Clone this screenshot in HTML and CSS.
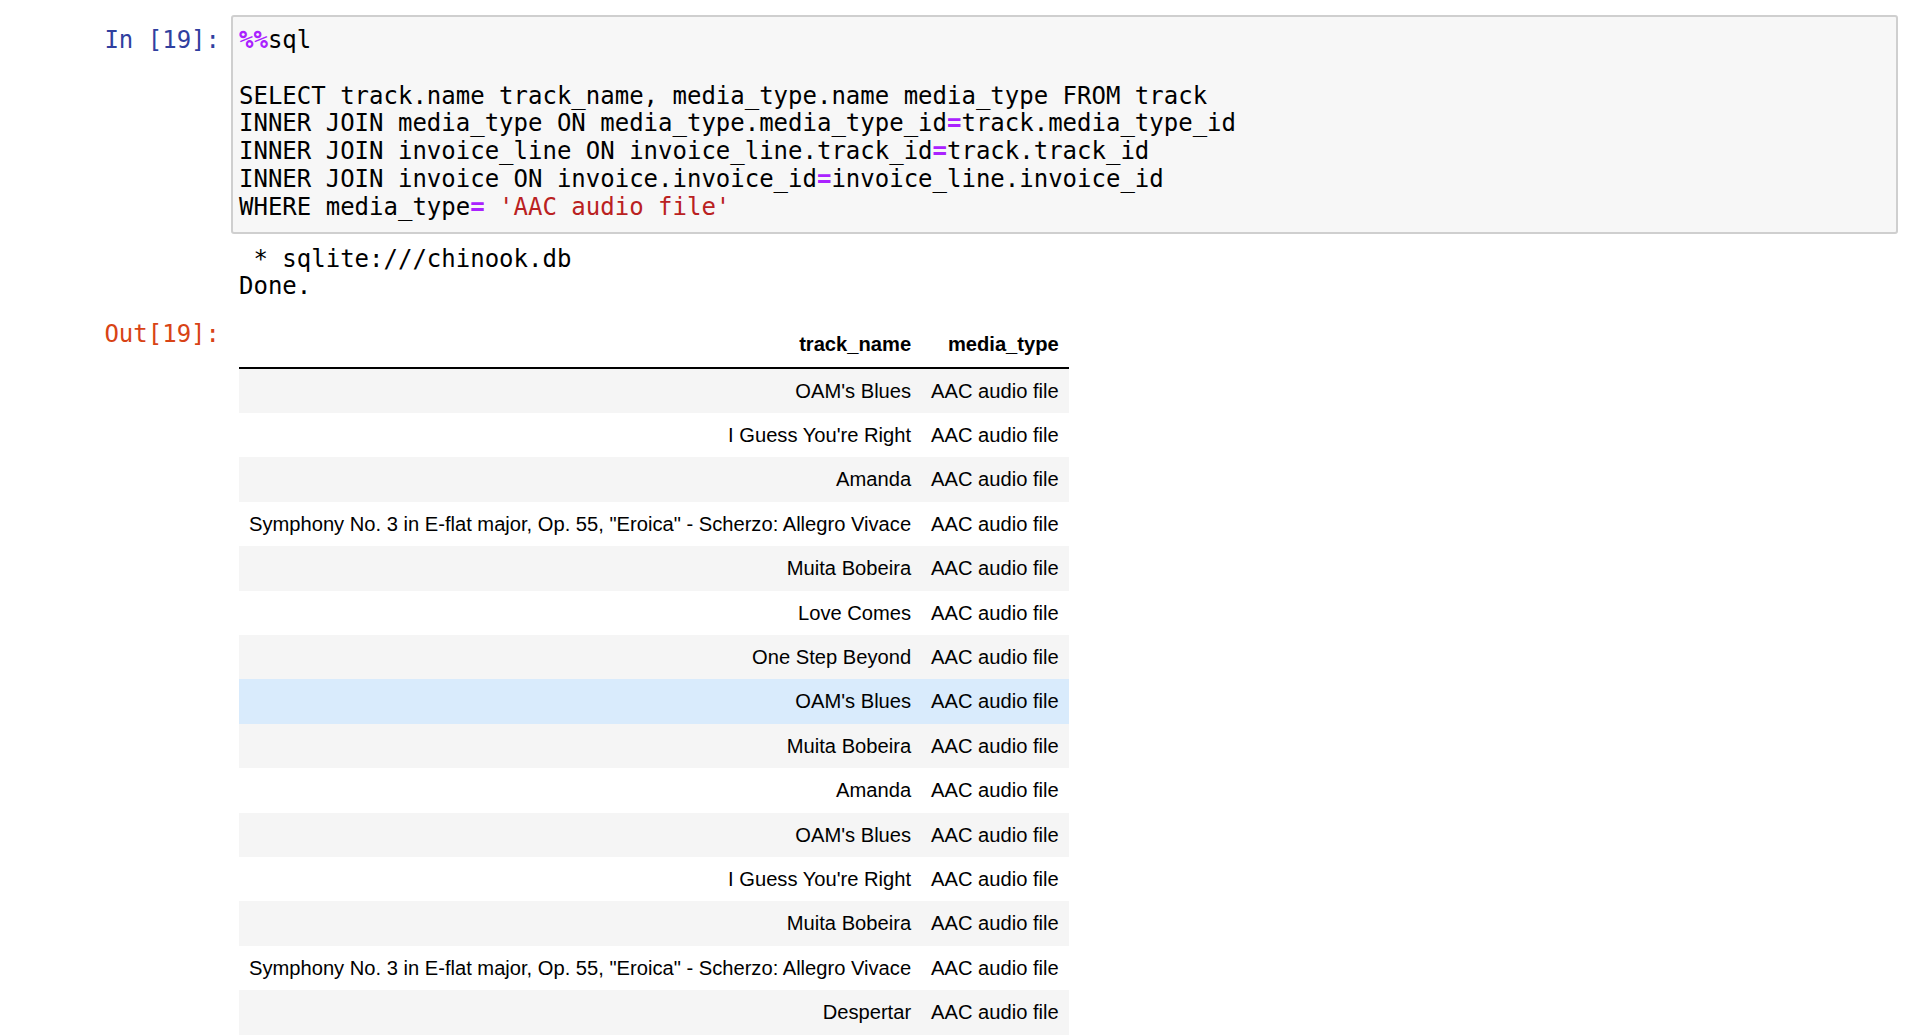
FILE: index.html
```html
<!DOCTYPE html>
<html>
<head>
<meta charset="utf-8">
<link rel="stylesheet" href="styles.css">
</head>
<body>
<div class="notebook">
  <div class="cell-row input-row">
    <div class="prompt in-prompt">In&nbsp;[19]:</div>
    <div class="input-area"><pre class="code"><span class="op">%%</span>sql

SELECT track.name track_name, media_type.name media_type FROM track
INNER JOIN media_type ON media_type.media_type_id<span class="op">=</span>track.media_type_id
INNER JOIN invoice_line ON invoice_line.track_id<span class="op">=</span>track.track_id
INNER JOIN invoice ON invoice.invoice_id<span class="op">=</span>invoice_line.invoice_id
WHERE media_type<span class="op">=</span> <span class="str">'AAC audio file'</span></pre></div>
  </div>
  <div class="cell-row stream-row">
    <div class="prompt"></div>
    <pre class="stream"> * sqlite:///chinook.db
Done.</pre>
  </div>
  <div class="cell-row out-row">
    <div class="prompt out-prompt">Out[19]:</div>
    <div class="output-html">
      <table class="df">
        <thead>
          <tr><th>track_name</th><th>media_type</th></tr>
        </thead>
        <tbody>
          <tr><td>OAM's Blues</td><td>AAC audio file</td></tr>
          <tr><td>I Guess You're Right</td><td>AAC audio file</td></tr>
          <tr><td>Amanda</td><td>AAC audio file</td></tr>
          <tr><td>Symphony No. 3 in E-flat major, Op. 55, "Eroica" - Scherzo: Allegro Vivace</td><td>AAC audio file</td></tr>
          <tr><td>Muita Bobeira</td><td>AAC audio file</td></tr>
          <tr><td>Love Comes</td><td>AAC audio file</td></tr>
          <tr><td>One Step Beyond</td><td>AAC audio file</td></tr>
          <tr class="hover"><td>OAM's Blues</td><td>AAC audio file</td></tr>
          <tr><td>Muita Bobeira</td><td>AAC audio file</td></tr>
          <tr><td>Amanda</td><td>AAC audio file</td></tr>
          <tr><td>OAM's Blues</td><td>AAC audio file</td></tr>
          <tr><td>I Guess You're Right</td><td>AAC audio file</td></tr>
          <tr><td>Muita Bobeira</td><td>AAC audio file</td></tr>
          <tr><td>Symphony No. 3 in E-flat major, Op. 55, "Eroica" - Scherzo: Allegro Vivace</td><td>AAC audio file</td></tr>
          <tr><td>Despertar</td><td>AAC audio file</td></tr>
        </tbody>
      </table>
    </div>
  </div>
</div>
</body>
</html>
```

FILE: styles.css
```css
html, body {
  margin: 0;
  padding: 0;
  background: #ffffff;
}

body {
  font-family: "Liberation Sans", Arial, sans-serif;
  color: #000;
  overflow: hidden;
}

.notebook {
  padding-top: 15px;
  padding-right: 32px;
}

.cell-row {
  display: flex;
  align-items: flex-start;
  gap: 11px;
}

.prompt {
  width: 220px;
  flex: 0 0 220px;
  text-align: right;
  font-family: "DejaVu Sans Mono", "Liberation Mono", monospace;
  font-size: 24px;
  line-height: 27.8px;
  white-space: nowrap;
}

.in-prompt {
  color: #303f9f;
  padding-top: 12px;
}

.out-prompt {
  color: #d84315;
}

.input-area {
  flex: 1;
  background: #f7f7f7;
  border: 2px solid #cfcfcf;
  border-radius: 3px;
  padding: 10px 6px 10px 6px;
}

.code,
.stream {
  margin: 0;
  font-family: "DejaVu Sans Mono", "Liberation Mono", monospace;
  font-size: 24px;
  line-height: 27.8px;
  color: #000;
  white-space: pre;
}

.op {
  color: #aa22ff;
  font-weight: bold;
}

.str {
  color: #ba2121;
}

.stream-row {
  margin-top: 12px;
}

.stream {
  padding-left: 8px;
}

.out-row {
  margin-top: 20px;
}

.output-html {
  padding-left: 8px;
  padding-top: 1px;
}

.df {
  border-collapse: collapse;
  border: none;
  font-size: 20.15px;
}

.df th,
.df td {
  text-align: right;
  vertical-align: middle;
  padding: 10px 10px;
  line-height: 24.4px;
  white-space: nowrap;
}

.df th {
  font-weight: bold;
  border-bottom: 2px solid #000;
}

.df tbody tr:nth-child(odd) {
  background: #f5f5f5;
}

.df tbody tr.hover {
  background: #d9ebfc;
}
```
